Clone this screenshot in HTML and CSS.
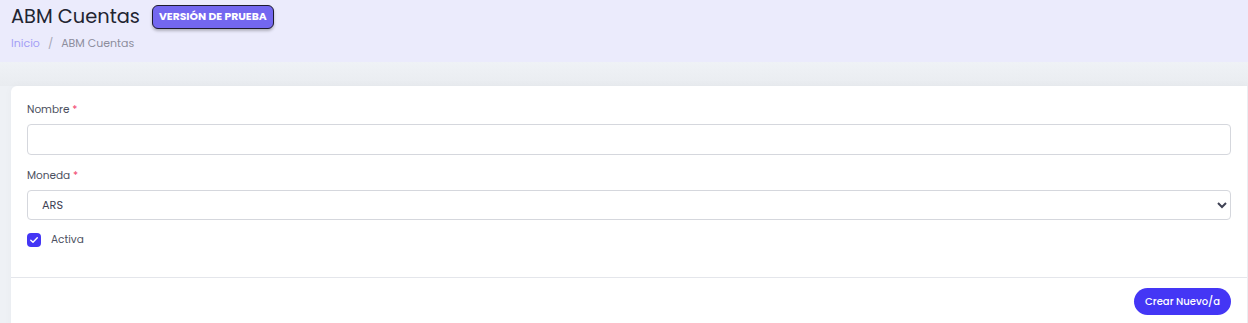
FILE: index.html
```html
<!DOCTYPE html>
<html lang="es">
<head>
<meta charset="utf-8">
<link rel="stylesheet" href="styles.css">
</head>
<body>
<header class="page-header">
  <div class="title-row">
    <h1 class="title">ABM Cuentas</h1>
    <span class="badge">VERSIÓN DE PRUEBA</span>
  </div>
  <nav class="breadcrumb">
    <span class="crumb-link">Inicio</span>
    <span class="crumb-sep">/</span>
    <span class="crumb-current">ABM Cuentas</span>
  </nav>
</header>
<main class="content">
  <section class="card">
    <div class="card-body">
      <div class="field">
        <label class="label">Nombre <span class="req">*</span></label>
        <input class="input" type="text">
      </div>
      <div class="field">
        <label class="label">Moneda <span class="req">*</span></label>
        <select class="input select">
          <option>ARS</option>
        </select>
      </div>
      <div class="check-row">
        <span class="checkbox">
          <svg width="10" height="10" viewBox="0 0 10 10"><path d="M1.8 5.2 L4 7.3 L8.3 2.8" fill="none" stroke="#fff" stroke-width="1.4" stroke-linecap="round" stroke-linejoin="round"/></svg>
        </span>
        <span class="check-label">Activa</span>
      </div>
    </div>
    <div class="card-footer">
      <button class="btn">Crear Nuevo/a</button>
    </div>
  </section>
</main>
</body>
</html>
```
FILE: styles.css
```css
html, body {
  margin: 0;
  padding: 0;
}
body {
  font-family: "Poppins", "Open Sans", "Noto Sans", sans-serif;
  background: #eef1f5;
  color: #3f4254;
  height: 323px;
  overflow: hidden;
}
.page-header {
  background: #ebebfc;
  padding: 5px 11px 0;
  height: 57px;
}
.title-row {
  display: flex;
  align-items: center;
  gap: 12px;
  height: 24px;
}
.title {
  margin: 0;
  font-size: 19.4px;
  font-weight: 400;
  color: #222431;
  line-height: 24px;
}
.badge {
  display: inline-flex;
  align-items: center;
  height: 22px;
  padding: 0 6px;
  background: #7367f0;
  color: #fff;
  font-size: 10.8px;
  font-weight: 700;
  border: 1px solid #1d1b2e;
  border-radius: 6px;
  box-shadow: 0 2px 3px rgba(0,0,0,0.25);
}
.breadcrumb {
  display: flex;
  gap: 8px;
  margin-top: 7px;
  font-size: 11px;
  line-height: 14px;
}
.crumb-link { color: #a39ef6; }
.crumb-sep { color: #a7a7b5; }
.crumb-current { color: #8d8d9c; }
.content {
  padding: 24px 0 0 11px;
  background: linear-gradient(#eff2f6, #e9ecf0 24px, #eef1f5 24px);
}
.card {
  background: #fff;
  border-radius: 6px 0 0 0;
  margin-right: 1px;
  box-shadow: 0 0 8px rgba(0,0,0,0.03);
}
.card-body {
  padding: 16px 16px 30px;
}
.field {
  margin-bottom: 13px;
}
.label {
  display: block;
  font-size: 10.5px;
  line-height: 15px;
  color: #4b5060;
  margin-bottom: 7px;
}
.req { color: #f1416c; }
.input {
  display: block;
  box-sizing: border-box;
  width: 100%;
  height: 31px;
  border: 1px solid #d5d7dd;
  border-radius: 4px;
  background: #fff;
  font-family: inherit;
  font-size: 11.3px;
  color: #3f4254;
  padding: 0 13px;
  outline: none;
}
.select {
  height: 30px;
  padding-left: 10px;
}
.check-row {
  display: flex;
  align-items: center;
  gap: 10px;
  height: 14px;
}
.checkbox {
  width: 14px;
  height: 14px;
  border-radius: 4px;
  background: #4436f5;
  display: flex;
  align-items: center;
  justify-content: center;
}
.check-label {
  font-size: 10.5px;
  color: #4b5060;
}
.card-footer {
  border-top: 1px solid #e4e6eb;
  padding: 10px 16px 12px;
  display: flex;
  justify-content: flex-end;
}
.btn {
  height: 27px;
  padding: 0 11px;
  border: none;
  border-radius: 14px;
  background: #4436f5;
  color: #fff;
  font-family: inherit;
  font-size: 10px;
  font-weight: 500;
}
```
